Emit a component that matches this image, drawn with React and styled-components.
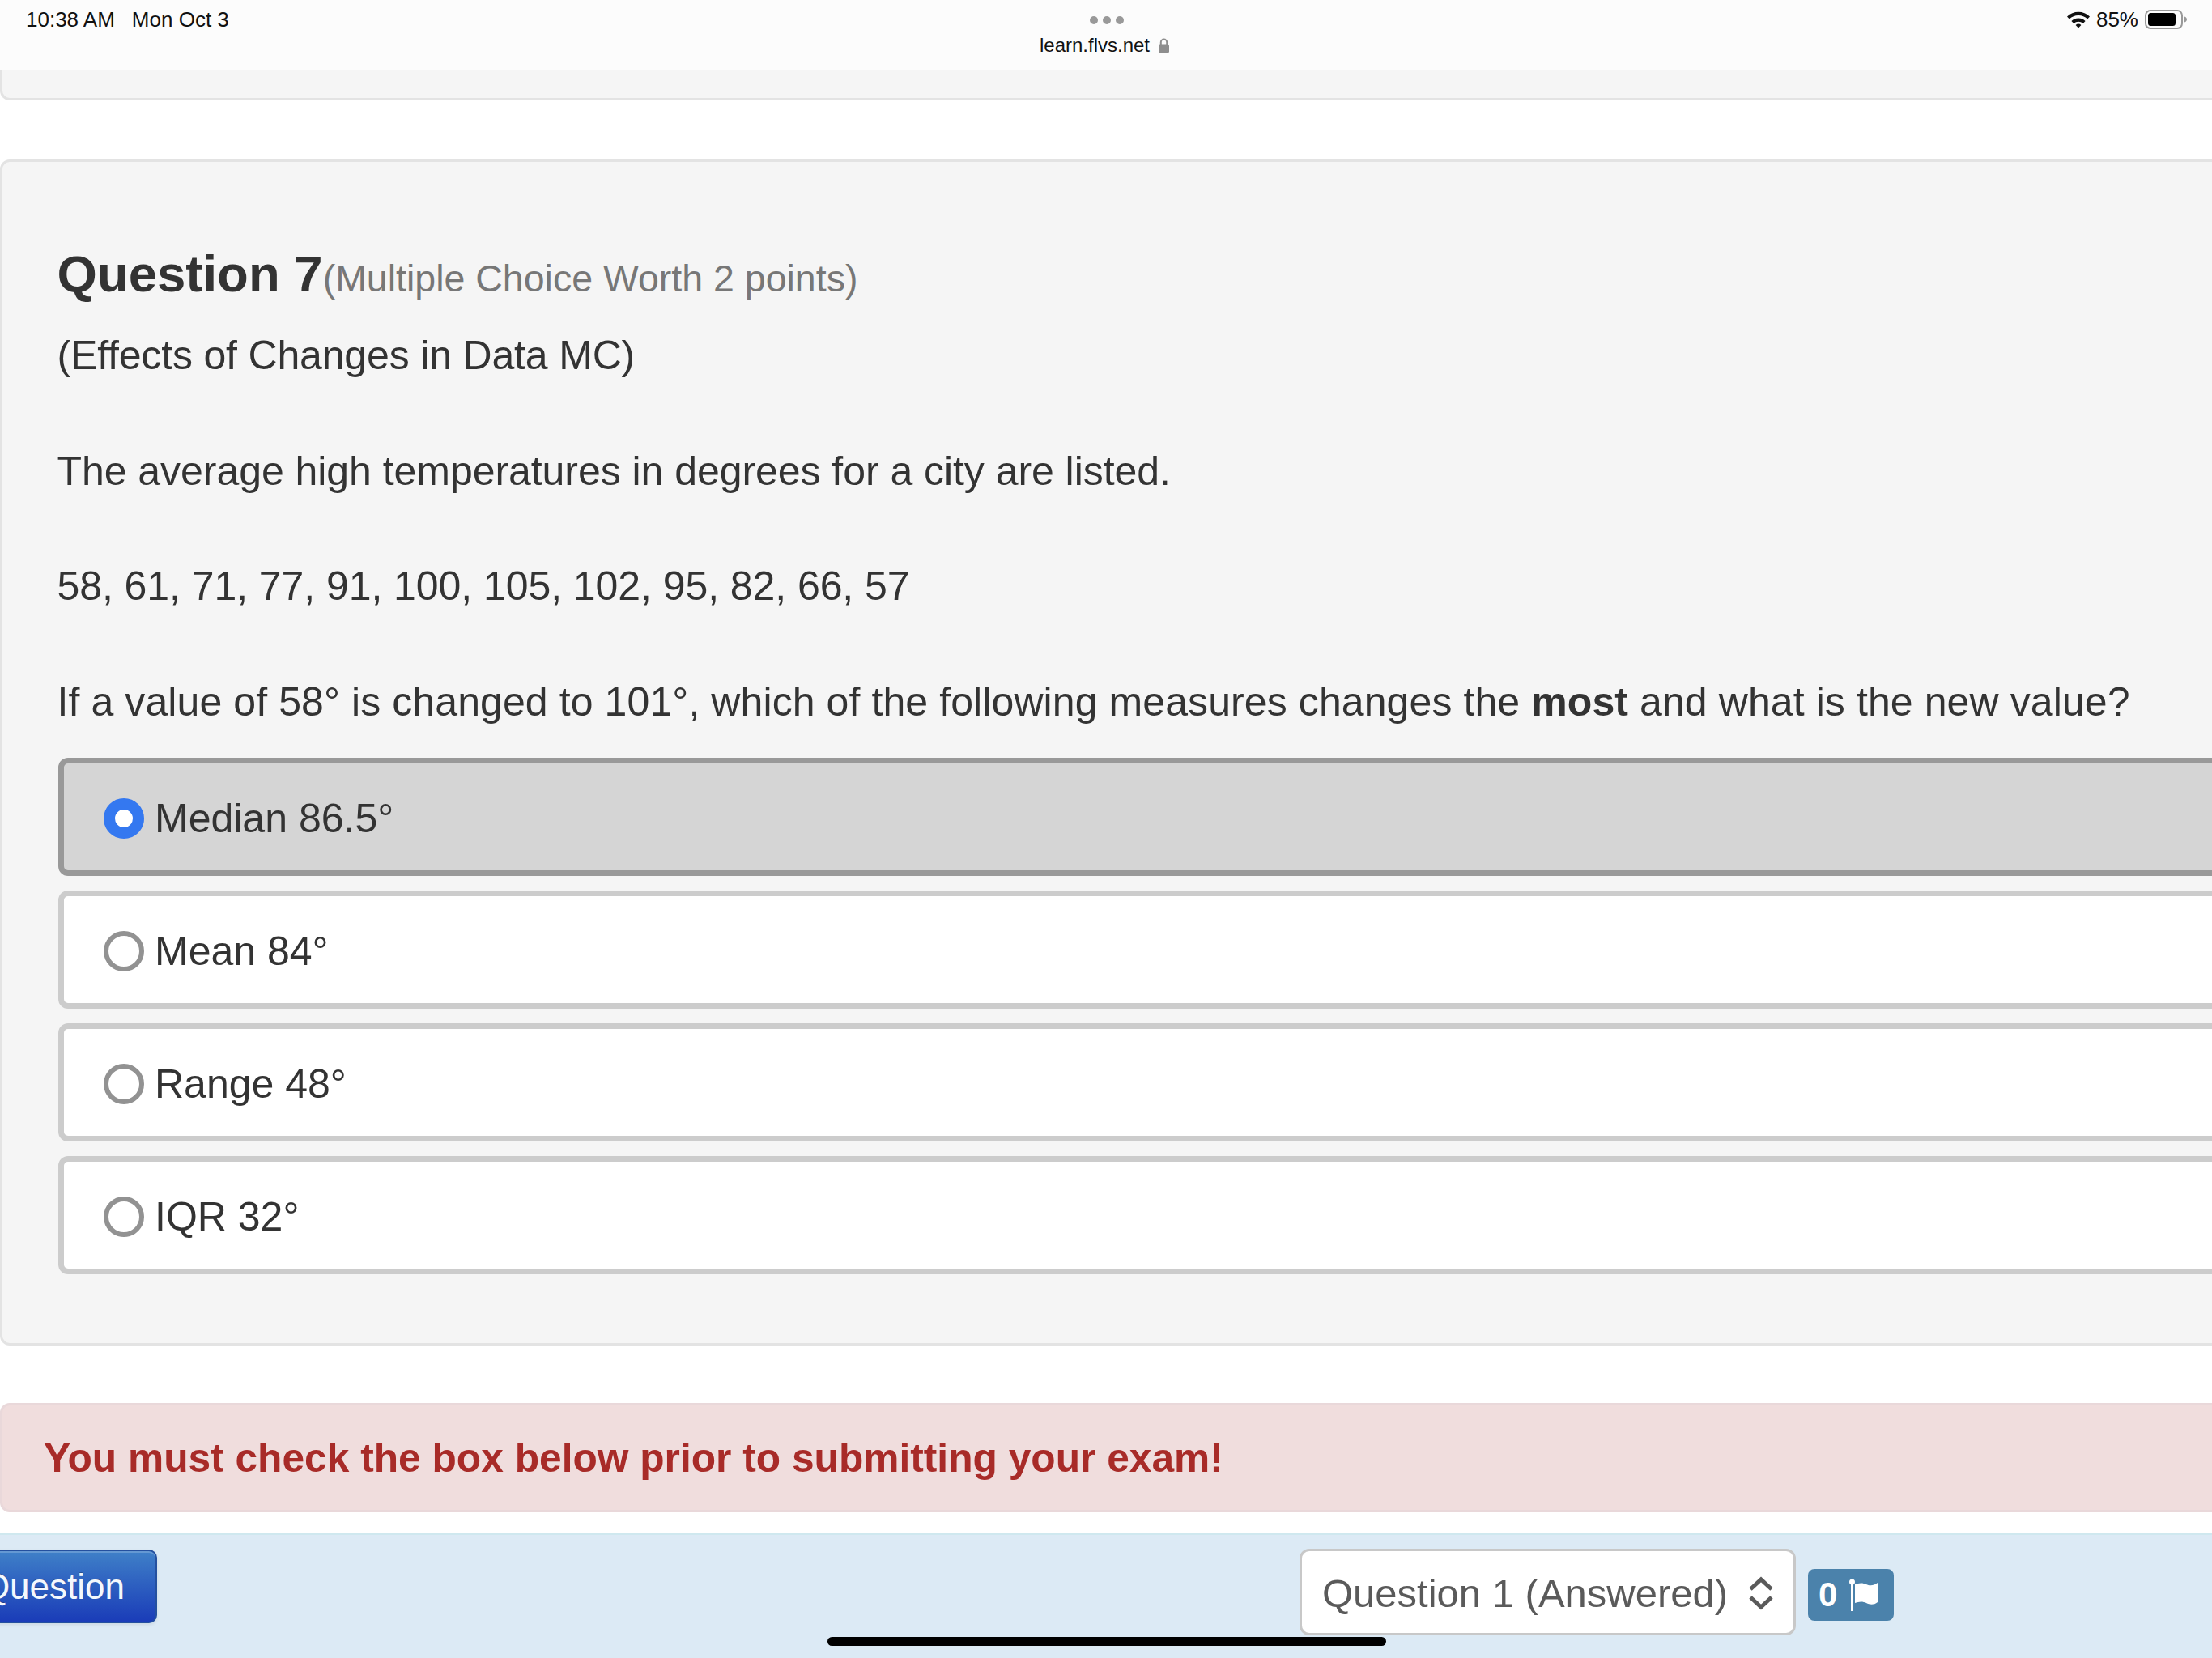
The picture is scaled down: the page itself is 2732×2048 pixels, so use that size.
import React from 'react';
import styled, { createGlobalStyle } from 'styled-components';

const GlobalStyle = createGlobalStyle`
  html, body {
    margin: 0;
    padding: 0;
    background: #fff;
  }
`;

const Page = styled.div`
  position: relative;
  width: 2732px;
  height: 2048px;
  overflow: hidden;
  display: flex;
  flex-direction: column;
  background: #fff;
  color: #333;
  font-family: "Liberation Sans", Arial, sans-serif;
`;

const StatusBar = styled.header`
  flex: none;
  height: 86px;
  box-sizing: content-box;
  display: grid;
  grid-template-columns: 1fr auto 1fr;
  padding: 0 30px 0 32px;
  background: #fcfcfc;
  border-bottom: 1px solid #ababab;
  color: #111;
  font-size: 26px;
`;

const Clock = styled.div`
  display: flex;
  gap: 21px;
  padding-top: 10px;
  line-height: 28px;
`;

const AddressBlock = styled.div`
  display: flex;
  flex-direction: column;
  align-items: center;
  padding-top: 20px;
  font-size: 24px;
`;

const Dots = styled.div`
  display: flex;
  gap: 6px;
`;

const Dot = styled.span`
  width: 10px;
  height: 10px;
  border-radius: 50%;
  background: #999;
`;

const Address = styled.div`
  display: flex;
  align-items: center;
  gap: 11px;
  margin: 12px 6px 0 0;
  line-height: 28px;
`;

const Indicators = styled.div`
  display: flex;
  justify-content: flex-end;
  align-items: flex-start;
  gap: 8px;
  padding-top: 10px;
  line-height: 28px;
`;

const Stub = styled.div`
  flex: none;
  height: 37px;
  margin-right: -20px;
  box-sizing: border-box;
  background: #f5f5f5;
  border: 3px solid #e3e3e3;
  border-top: 0;
  border-radius: 0 0 12px 12px;
`;

const Panel = styled.section`
  flex: none;
  height: 1465px;
  margin: 73px -20px 0 0;
  padding: 101px 0 0 69px;
  box-sizing: border-box;
  background: #f5f5f5;
  border: 3px solid #e3e3e3;
  border-radius: 12px;
`;

const TitleRow = styled.div`
  display: flex;
  align-items: baseline;
  height: 74px;
  margin-left: -1.5px;
  line-height: 74px;
`;

const Title = styled.h2`
  margin: 0;
  font-size: 63.5px;
  font-weight: 700;
  color: #333;
`;

const Points = styled.span`
  font-size: 46.5px;
  color: #777;
`;

const Body = styled.div`
  margin: 29px 0 0 -1.5px;
  width: 2660px;
  font-size: 50px;
  line-height: 71.3px;
  color: #333;
`;

const Line = styled.p`
  margin: 0 0 71.3px;
  white-space: nowrap;
  letter-spacing: ${(p) => p.$spacing || 0}px;
  &:last-child {
    margin-bottom: 0;
  }
`;

const Options = styled.div`
  display: flex;
  flex-direction: column;
  gap: 18px;
  margin-top: 33px;
`;

const Option = styled.label`
  height: 146px;
  box-sizing: border-box;
  display: flex;
  align-items: center;
  gap: 13px;
  padding: 4px 0 0 49px;
  font-size: 50px;
  color: #333;
  background: ${(p) => (p.$selected ? '#d5d5d5' : '#fff')};
  border: 7px solid ${(p) => (p.$selected ? '#999' : '#ccc')};
  border-radius: 12px;
`;

const Radio = styled.span`
  flex: none;
  width: 50px;
  height: 50px;
  box-sizing: border-box;
  border-radius: 50%;
  background: #fff;
  border: ${(p) => (p.$checked ? '14px solid #3478f0' : '6px solid #929292')};
`;

const Alert = styled.div`
  flex: none;
  height: 135px;
  margin: 71px -20px 0 0;
  padding-left: 51px;
  box-sizing: border-box;
  display: flex;
  align-items: center;
  background: #f0dddd;
  border: 3px solid #e9d8da;
  border-radius: 12px;
  color: #a82b28;
  font-size: 49.7px;
  font-weight: 700;
`;

const Footer = styled.footer`
  flex: 1;
  margin-top: 25px;
  position: relative;
  display: flex;
  justify-content: space-between;
  background: #dceaf5;
  border-top: 3px solid #cfe8ef;
`;

const NextButton = styled.button`
  height: 91px;
  width: 234px;
  margin: 18px 0 0 -40px;
  padding: 1px 38px 0 0;
  box-sizing: border-box;
  display: flex;
  align-items: center;
  justify-content: flex-end;
  white-space: nowrap;
  font-family: inherit;
  font-size: 44px;
  color: #f4f8fd;
  text-shadow: 0 -1px 0 rgba(0, 0, 0, 0.25);
  background: linear-gradient(#3f80c8, #1a3cb8);
  border: 2px solid #24509f;
  border-radius: 10px;
  box-shadow: inset 0 2px 0 rgba(255, 255, 255, 0.2), 0 2px 4px rgba(0, 0, 0, 0.08);
`;

const Jump = styled.div`
  display: flex;
  align-items: flex-start;
  gap: 15px;
  margin-right: 393px;
  padding-top: 17px;
`;

const Select = styled.div`
  width: 613px;
  height: 107px;
  padding: 3px 23px 0 25px;
  box-sizing: border-box;
  display: flex;
  align-items: center;
  justify-content: space-between;
  background: #fff;
  border: 3px solid #c8c8c8;
  border-radius: 12px;
  color: #5a5a5a;
  font-size: 49px;
`;

const FlagBadge = styled.div`
  margin-top: 25px;
  width: 106px;
  height: 64px;
  box-sizing: border-box;
  display: flex;
  align-items: center;
  gap: 15px;
  padding-left: 13px;
  background: #4b82ab;
  border-radius: 8px;
  color: #fff;
  font-size: 42px;
  font-weight: 700;
`;

const HomeBar = styled.div`
  position: absolute;
  left: 1022px;
  top: 2022px;
  width: 690px;
  height: 11px;
  border-radius: 6px;
  background: #000;
`;

const WifiIcon = () => (
  <svg width="28" height="22" viewBox="0 0 28 22" style={{ marginTop: 3 }}>
    <path d="M0 7.500a20 20 0 0 1 28 0l-2.800 3a16 16 0 0 0-22.400 0Z" fill="#111" />
    <path d="M5.400 13a12.500 12.500 0 0 1 17.200 0l-2.900 3a8.500 8.500 0 0 0-11.400 0Z" fill="#111" />
    <path d="M10.600 18a5.200 5.200 0 0 1 6.800 0L14 21.500Z" fill="#111" />
  </svg>
);

const BatteryIcon = () => (
  <svg width="53" height="24" viewBox="0 0 53 24" style={{ marginTop: 2 }}>
    <rect x="1" y="1" width="45" height="22" rx="6" fill="none" stroke="#999" strokeWidth="2" />
    <rect x="4" y="4" width="34" height="16" rx="3.500" fill="#000" />
    <path d="M49 8.500c2 .6 3 2 3 3.500s-1 2.900-3 3.500Z" fill="#999" />
  </svg>
);

const LockIcon = () => (
  <svg width="13" height="19" viewBox="0 0 13 19">
    <path d="M2.800 8V5.200a3.700 3.700 0 0 1 7.400 0V8" fill="none" stroke="#8e8e8e" strokeWidth="2" />
    <rect x="0" y="7.500" width="13" height="11" rx="2" fill="#8e8e8e" />
  </svg>
);

const Chevrons = () => (
  <svg width="34" height="42" viewBox="0 0 34 42" fill="none" stroke="#5a5a5a" strokeWidth="5">
    <path d="M4 16 17 4l13 12" />
    <path d="M4 26l13 12 13-12" />
  </svg>
);

const FlagIcon = () => (
  <svg width="42" height="40" viewBox="0 0 42 40">
    <rect x="2" y="4" width="3" height="36" fill="#fff" />
    <circle cx="3.500" cy="4" r="3.500" fill="#fff" />
    <path d="M7 7c5-2 10-2 14 0s9 2 14-2v24c-5 4-10 3-14 1s-9-2-14 0Z" fill="#fff" />
  </svg>
);

const answers = [
  { label: 'Median 86.5°', selected: true },
  { label: 'Mean 84°' },
  { label: 'Range 48°' },
  { label: 'IQR 32°' },
];

const App = () => (
  <Page>
    <GlobalStyle />
    <StatusBar>
      <Clock>
        <span>10:38 AM</span>
        <span>Mon Oct 3</span>
      </Clock>
      <AddressBlock>
        <Dots>
          <Dot />
          <Dot />
          <Dot />
        </Dots>
        <Address>
          <span>learn.flvs.net</span>
          <LockIcon />
        </Address>
      </AddressBlock>
      <Indicators>
        <WifiIcon />
        <span>85%</span>
        <BatteryIcon />
      </Indicators>
    </StatusBar>
    <Stub />
    <Panel>
      <TitleRow>
        <Title>Question 7</Title>
        <Points>(Multiple Choice Worth 2 points)</Points>
      </TitleRow>
      <Body>
        <Line $spacing={-0.17}>(Effects of Changes in Data MC)</Line>
        <Line $spacing={-0.05}>The average high temperatures in degrees for a city are listed.</Line>
        <Line $spacing={-0.07}>58, 61, 71, 77, 91, 100, 105, 102, 95, 82, 66, 57</Line>
        <Line $spacing={0.09}>
          If a value of 58° is changed to 101°, which of the following measures changes the <b>most</b> and what is the new value?
        </Line>
      </Body>
      <Options>
        {answers.map((a) => (
          <Option key={a.label} $selected={a.selected}>
            <Radio $checked={a.selected} />
            {a.label}
          </Option>
        ))}
      </Options>
    </Panel>
    <Alert>You must check the box below prior to submitting your exam!</Alert>
    <Footer>
      <NextButton>Question</NextButton>
      <Jump>
        <Select>
          <span>Question 1 (Answered)</span>
          <Chevrons />
        </Select>
        <FlagBadge>
          0
          <FlagIcon />
        </FlagBadge>
      </Jump>
    </Footer>
    <HomeBar />
  </Page>
);

export default App;
